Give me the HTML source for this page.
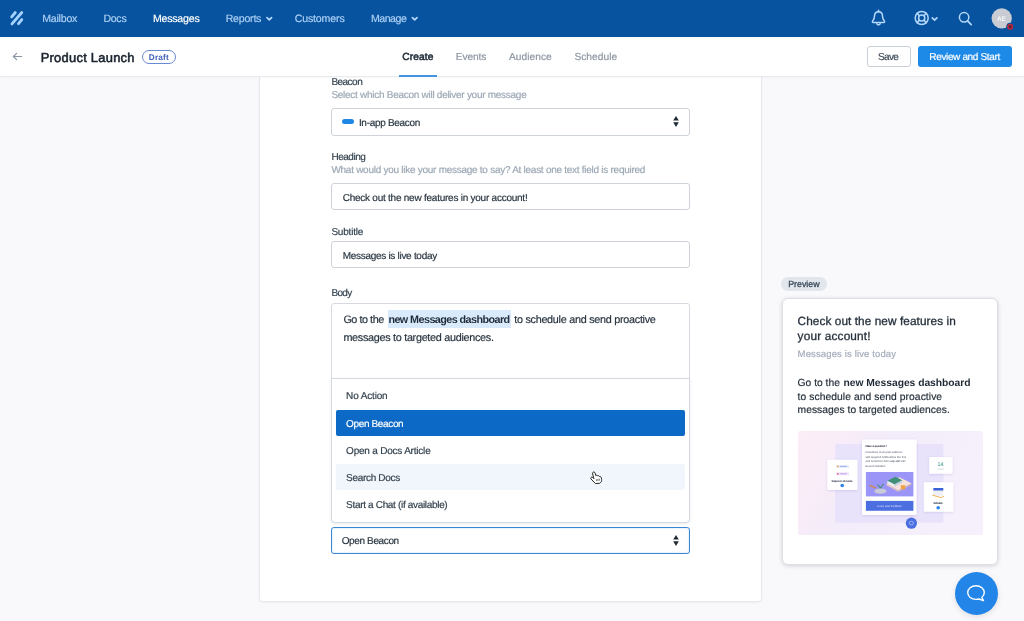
<!DOCTYPE html>
<html><head><meta charset="utf-8"><title>Product Launch</title>
<style>
*{box-sizing:border-box;margin:0;padding:0}
html,body{width:1024px;height:621px;overflow:hidden}
body{text-rendering:geometricPrecision;background:#f9f9fb;font-family:"Liberation Sans",sans-serif;color:#253642;position:relative}
.a{position:absolute}
.t{position:absolute;white-space:nowrap;font-family:"Liberation Sans",sans-serif}
#nav{left:0;top:0;width:1024px;height:37.4px;background:#07539f}
#sub{left:0;top:37px;width:1024px;height:39.5px;background:#fff;border-bottom:1px solid #e9ebee;box-shadow:0 1px 2px rgba(30,40,60,.04)}
#card{left:259px;top:60px;width:502.5px;height:541.5px;background:#fff;border:1px solid #e6e8ec;border-radius:4px;box-shadow:0 1px 2px rgba(30,40,60,.05)}
#draft{left:141.8px;top:50.2px;width:34.1px;height:14px;border:1px solid #6a88d4;border-radius:7px}
#tabline{left:398.7px;top:74.800px;width:38.5px;height:2px;background:#4394e2}
#save{left:867.2px;top:46.1px;width:43.7px;height:21px;border:1px solid #c9d0d7;border-radius:3px;background:#fff}
#review{left:917.9px;top:45.8px;width:94px;height:21.4px;border-radius:3px;background:#1e8ae8}
.inp{position:absolute;left:331px;width:358.5px;background:#fff;border:1px solid #cdd3d9;border-radius:3px}
#dd{left:331px;top:378px;width:358.5px;height:145px;background:#fff;border:1px solid #d5dae0;border-radius:0 0 4px 4px;box-shadow:0 1px 3px rgba(30,40,60,.10)}
#sel{left:335.6px;top:410px;width:349.6px;height:25.5px;background:#0c69c6;border-radius:2px}
#hov{left:335.6px;top:463.8px;width:349.6px;height:26px;background:#f1f6fd;border-radius:2px}
#focus{left:331px;top:526.7px;width:358.5px;height:27.2px;border:1.800px solid #3b85d2;border-radius:2.800px;background:#fff;box-shadow:inset 0 0 2px rgba(110,190,255,.55)}
#pbadge{left:781px;top:276.5px;width:46px;height:14.5px;border-radius:7.5px;background:#e2e7ed}
#pcard{left:782.3px;top:298.4px;width:216.2px;height:266.4px;border-radius:6px;background:#fff;border:1px solid #dcdfe4;box-shadow:0 1px 4px rgba(30,40,60,.18)}
#chat{left:954.6px;top:571.7px;width:43.4px;height:43.4px;border-radius:50%;background:#2485e8;box-shadow:0 2px 6px rgba(0,0,0,.10)}
#root{position:absolute;left:0;top:0;width:1024px;height:621px;will-change:transform}
</style></head><body><div id="root">
<div id="card" class="a"></div>
<div id="nav" class="a"></div>
<div id="sub" class="a"></div>
<div id="tabline" class="a"></div>
<div id="draft" class="a"></div>
<div id="save" class="a"></div>
<div id="review" class="a"></div>
<!-- nav icons -->
<svg class="a" style="left:0;top:0" width="1024" height="37" viewBox="0 0 1024 37">
 <g stroke="#a3d2ff" stroke-width="2.8" stroke-linecap="round" fill="none">
  <line x1="11.7" y1="16.9" x2="15.3" y2="12.5"/><line x1="12" y1="23.9" x2="21.8" y2="12.5"/><line x1="18.5" y1="23.7" x2="21.8" y2="19.6"/>
 </g>
 <g stroke="#b4d8fb" stroke-width="1.700" fill="none" stroke-linecap="round" stroke-linejoin="round">
  <polyline points="267,17.600 269.300,19.900 271.600,17.600"/>
  <polyline points="412.400,17.600 414.700,19.900 417,17.600"/>
 </g>
 <g stroke="#b4d8fb" stroke-width="1.5" fill="none" stroke-linecap="round" stroke-linejoin="round">
  <!-- bell -->
  <path d="M878.5 10.3 v1.2 M878.5 11.7 c-2.4 0 -4 1.800 -4 4.400 c0 2.400 -.4 3.500 -1.700 4.700 c-.8 .8 -.4 1.700 .6 1.700 h10.200 c1 0 1.400 -.9 .6 -1.700 c-1.300 -1.200 -1.700 -2.300 -1.700 -4.700 c0 -2.600 -1.600 -4.400 -4 -4.400 z"/>
  <path d="M876.9 23.7 a1.700 1.700 0 0 0 3.200 0"/>
  <!-- lifebuoy -->
  <circle cx="921.7" cy="18" r="6.5"/><circle cx="921.7" cy="18" r="3.1"/>
  <path d="M917.1 13.4 l2.400 2.400 M926.3 13.4 l-2.400 2.400 M917.1 22.6 l2.400 -2.400 M926.3 22.6 l-2.400 -2.400"/>
  <polyline points="932.3,17.800 934.600,20.100 936.900,17.800" stroke-width="1.700"/>
  <!-- search -->
  <circle cx="964.1" cy="17.3" r="4.7"/><line x1="967.6" y1="20.900" x2="971.2" y2="24.600" stroke-width="1.700"/>
 </g>
 <circle cx="1001.7" cy="18.4" r="10.1" fill="#c9cdd3"/>
 <circle cx="1010.2" cy="26.7" r="3.9" fill="#07539f"/>
 <circle cx="1010.2" cy="26.7" r="2.4" fill="#5a2a3a" stroke="#c8243c" stroke-width="1.3"/>
</svg>
<!-- back arrow -->
<svg class="a" style="left:12px;top:51px" width="12" height="11" viewBox="0 0 12 11"><g stroke="#8a96a6" stroke-width="1.2" fill="none" stroke-linecap="round" stroke-linejoin="round"><line x1="1.4" y1="5.5" x2="9.6" y2="5.5"/><polyline points="4.6,2.3 1.4,5.5 4.6,8.7"/></g></svg>

<!-- form fields -->
<div class="inp" style="top:108px;height:27.5px"></div>
<div class="a" style="left:342px;top:119.2px;width:11.8px;height:5.2px;border-radius:2.6px;background:#1f88e6"></div>
<svg class="a" style="left:673.3px;top:116.4px" width="6" height="11" viewBox="0 0 6 11"><path d="M3 0 L5.8 4.6 H0.2 Z M3 11 L5.8 6.2 H0.2 Z" fill="#1f2a33"/></svg>
<div class="inp" style="top:183.2px;height:27px"></div>
<div class="inp" style="top:241.2px;height:27px"></div>
<div class="inp" style="top:303.2px;height:140px;border-color:#d6dae0"></div>
<div class="a" style="left:388px;top:310px;width:123.2px;height:17.5px;background:#d8eafb"></div>
<div id="dd" class="a"></div>
<div id="sel" class="a"></div>
<div id="hov" class="a"></div>
<div id="focus" class="a"></div>
<svg class="a" style="left:673.3px;top:535px" width="6" height="11" viewBox="0 0 6 11"><path d="M3 0 L5.8 4.6 H0.2 Z M3 11 L5.8 6.2 H0.2 Z" fill="#1f2a33"/></svg>
<!-- cursor -->
<svg class="a" style="left:590.3px;top:471.2px" width="13" height="14" viewBox="0 0 13 14"><path d="M3 1.300 C3.600 .6 4.600 .9 4.900 1.800 L5.900 4.700 C6.400 4 7.400 4.100 7.700 4.900 C8.300 4.400 9.300 4.700 9.500 5.500 C10.200 5.200 11 5.700 11.200 6.500 L11.600 8.600 C11.800 9.800 11.400 10.900 10.500 11.600 L9.600 12.300 L5.400 12.500 L1 8 C.5 7.400 .7 6.600 1.400 6.300 C2 6 2.700 6.300 3.100 6.800 L3.900 7.700 L2.600 2.900 C2.400 2.300 2.500 1.700 3 1.300 Z" fill="#fff" stroke="#1c1c1c" stroke-width=".95" stroke-linejoin="round"/><path d="M6.300 8.300 l.5 1.900 M7.700 8 l.5 1.900 M9.100 7.700 l.5 1.900" stroke="#333" stroke-width=".7" fill="none"/></svg>
<!-- preview -->
<div id="pbadge" class="a"></div>
<div id="pcard" class="a"></div>
<svg class="a" style="left:797.6px;top:431.3px" width="185" height="104.200" viewBox="797.6 431.3 185 104.200">
 <defs><linearGradient id="g1" x1="0" y1="0" x2="1" y2="0.300"><stop offset="0" stop-color="#fcedf6"/><stop offset=".5" stop-color="#f3ecfa"/><stop offset="1" stop-color="#f6f0fc"/></linearGradient>
 <filter id="sh" x="-20%" y="-20%" width="140%" height="140%"><feDropShadow dx="0" dy=".6" stdDeviation=".9" flood-color="#5040a0" flood-opacity=".18"/></filter></defs>
 <rect x="797.6" y="431.3" width="185" height="104.200" rx="2" fill="url(#g1)"/>
 <rect x="834.8" y="444.4" width="108.200" height="78.600" rx="1.500" fill="#e8e3fb"/>
 <g filter="url(#sh)" fill="#fff">
  <rect x="861.6" y="439.8" width="54.600" height="75.600" rx="1.200"/>
  <rect x="826.9" y="460.1" width="30.200" height="30.300" rx="1"/>
  <rect x="928.8" y="457.2" width="23.500" height="16.900" rx="1"/>
  <rect x="923.4" y="482.5" width="29.600" height="29.500" rx="1"/>
 </g>
 <rect x="865.5" y="472.3" width="47.500" height="24.400" fill="#9a95f7"/>
 <rect x="865.5" y="501.2" width="47.500" height="9.900" fill="#4b6fe0"/>
 <!-- mini isometric illustration -->
 <polygon points="886,484 899,477.500 911,483.500 898,490.500" fill="#f6e3dc"/>
 <polygon points="886,484 898,490.500 898,492 886,485.500" fill="#e5c9c4"/>
 <polygon points="898,490.500 911,483.500 911,485 898,492" fill="#d9b9b6"/>
 <polygon points="887,481 895,477 902,480.500 894,484.800" fill="#3f8f7a"/>
 <polygon points="887,481 894,484.800 894,487 887,483.200" fill="#e9eef5"/>
 <polygon points="894,484.800 902,480.500 902,482.700 894,487" fill="#c7d0e0"/>
 <rect x="900.5" y="485.500" width="4.200" height="4.200" fill="#f0a340"/>
 <path d="M868.500 486 l6 3 l1.800 -1 l-6 -3 z" fill="#c98a5e"/>
 <ellipse cx="880" cy="491.500" rx="6" ry="2.600" fill="#c9cbd6"/>
 <path d="M880 488.500 q-1.500 -3 -3 -3.500 M880.500 488.500 q1 -3.500 3 -4" stroke="#3f8f7a" stroke-width="1.100" fill="none"/>
 <!-- left card -->
 <rect x="835.7" y="465.200" width="13.100" height="3" rx=".6" fill="#e8edfb"/><circle cx="837.400" cy="466.700" r=".9" fill="#f0a340"/><rect x="839.500" y="466.200" width="7" height="1" fill="#9db4ee"/>
 <rect x="835.7" y="472.600" width="13.100" height="3" rx=".6" fill="#f1e6fb"/><circle cx="837.400" cy="474.100" r=".9" fill="#e8506a"/><rect x="839.500" y="473.600" width="7" height="1" fill="#c4a8ee"/>
 <circle cx="841.8" cy="485.800" r="1.800" fill="#2a84e6"/>
 <rect x="937.400" y="468.900" width="6" height=".9" fill="#cfd4db"/>
 <!-- calendar -->
 <rect x="932.9" y="488.200" width="10" height="2.800" rx=".5" fill="#3a63d8"/>
 <rect x="932.900" y="491" width="10" height="5" fill="#eef0f6"/>
 <path d="M932 495.500 l9 2.500 l2.500 -1.500" stroke="#f0b050" stroke-width="1" fill="none"/>
 <circle cx="937.8" cy="508" r="1.800" fill="#2a84e6"/>
 <circle cx="911" cy="523.500" r="5.600" fill="#4b6fe0"/>
 <ellipse cx="911" cy="523.400" rx="2.100" ry="1.800" fill="none" stroke="#cdd8ff" stroke-width=".6"/>
</svg>
<div id="chat" class="a"></div>
<svg class="a" style="left:964px;top:582px" width="24" height="23" viewBox="964 582 24 23"><path d="M976 585.700 c4.700 0 8.300 3 8.300 6.900 c0 2-1 3.700-2.500 4.900 l1.700 3.200 l-4.600-1.700 c-.9.300-1.900.4-2.900.4 c-4.700 0-8.300-3-8.300-6.800 c0-3.900 3.600-6.900 8.300-6.900 z" fill="none" stroke="#fff" stroke-width="1.400" stroke-linejoin="round"/></svg>
<span class="t" id="t0" style="left:42.2px;top:13.00px;font-size:10.6px;line-height:12.00px;color:#acd0f5;-webkit-text-stroke:0.18px currentColor;letter-spacing:-0.219px;">Mailbox</span>
<span class="t" id="t1" style="left:103.4px;top:13.00px;font-size:10.6px;line-height:12.00px;color:#acd0f5;-webkit-text-stroke:0.18px currentColor;letter-spacing:-0.280px;">Docs</span>
<span class="t" id="t2" style="left:152.9px;top:13.00px;font-size:10.6px;line-height:12.00px;color:#ffffff;-webkit-text-stroke:0.18px currentColor;letter-spacing:-0.214px;">Messages</span>
<span class="t" id="t3" style="left:225.7px;top:13.00px;font-size:10.6px;line-height:12.00px;color:#acd0f5;-webkit-text-stroke:0.18px currentColor;letter-spacing:-0.232px;">Reports</span>
<span class="t" id="t4" style="left:294.7px;top:13.00px;font-size:10.6px;line-height:12.00px;color:#acd0f5;-webkit-text-stroke:0.18px currentColor;letter-spacing:-0.152px;">Customers</span>
<span class="t" id="t5" style="left:370.9px;top:13.00px;font-size:10.6px;line-height:12.00px;color:#acd0f5;-webkit-text-stroke:0.18px currentColor;letter-spacing:-0.459px;">Manage</span>
<span class="t" id="t6" style="left:40.7px;top:50.00px;font-size:12.9px;line-height:15.00px;color:#18222c;-webkit-text-stroke:0.55px currentColor;letter-spacing:0.268px;">Product Launch</span>
<span class="t" id="t7" style="left:148.8px;top:53.00px;font-size:8.2px;line-height:9.00px;color:#3f62b8;font-weight:bold;letter-spacing:0.198px;">Draft</span>
<span class="t" id="t8" style="left:402.2px;top:52.00px;font-size:10.2px;line-height:11.00px;color:#26323d;-webkit-text-stroke:0.55px currentColor;letter-spacing:0.124px;">Create</span>
<span class="t" id="t9" style="left:455.7px;top:52.00px;font-size:10.2px;line-height:11.00px;color:#8c96a2;-webkit-text-stroke:0.18px currentColor;letter-spacing:-0.091px;">Events</span>
<span class="t" id="t10" style="left:508.9px;top:52.00px;font-size:10.2px;line-height:11.00px;color:#8c96a2;-webkit-text-stroke:0.18px currentColor;letter-spacing:0.045px;">Audience</span>
<span class="t" id="t11" style="left:574.4px;top:52.00px;font-size:10.2px;line-height:11.00px;color:#8c96a2;-webkit-text-stroke:0.18px currentColor;letter-spacing:0.045px;">Schedule</span>
<span class="t" id="t12" style="left:878.1px;top:52.00px;font-size:10px;line-height:11.00px;color:#3c4a57;-webkit-text-stroke:0.18px currentColor;letter-spacing:-0.666px;">Save</span>
<span class="t" id="t13" style="left:929.3px;top:52.00px;font-size:10px;line-height:11.00px;color:#ffffff;-webkit-text-stroke:0.18px currentColor;letter-spacing:-0.350px;">Review and Start</span>
<span class="t" id="t14" style="left:331.4px;top:77.00px;font-size:10px;line-height:11.00px;color:#33424f;-webkit-text-stroke:0.18px currentColor;letter-spacing:-0.524px;">Beacon</span>
<span class="t" id="t15" style="left:331.4px;top:90.00px;font-size:10px;line-height:11.00px;color:#9ca8b4;-webkit-text-stroke:0.18px currentColor;letter-spacing:-0.273px;">Select which Beacon will deliver your message</span>
<span class="t" id="t16" style="left:358.9px;top:118.00px;font-size:10px;line-height:11.00px;color:#27343f;-webkit-text-stroke:0.18px currentColor;letter-spacing:-0.297px;">In-app Beacon</span>
<span class="t" id="t17" style="left:331.4px;top:152.00px;font-size:10px;line-height:11.00px;color:#33424f;-webkit-text-stroke:0.18px currentColor;letter-spacing:-0.461px;">Heading</span>
<span class="t" id="t18" style="left:331.4px;top:165.00px;font-size:10px;line-height:11.00px;color:#9ca8b4;-webkit-text-stroke:0.18px currentColor;letter-spacing:-0.268px;">What would you like your message to say? At least one text field is required</span>
<span class="t" id="t19" style="left:342.7px;top:193.00px;font-size:10px;line-height:11.00px;color:#27343f;-webkit-text-stroke:0.18px currentColor;letter-spacing:-0.241px;">Check out the new features in your account!</span>
<span class="t" id="t20" style="left:331.4px;top:227.00px;font-size:10px;line-height:11.00px;color:#33424f;-webkit-text-stroke:0.18px currentColor;letter-spacing:-0.194px;">Subtitle</span>
<span class="t" id="t21" style="left:342.7px;top:251.00px;font-size:10px;line-height:11.00px;color:#27343f;-webkit-text-stroke:0.18px currentColor;letter-spacing:-0.291px;">Messages is live today</span>
<span class="t" id="t22" style="left:331.4px;top:288.00px;font-size:10px;line-height:11.00px;color:#33424f;-webkit-text-stroke:0.18px currentColor;letter-spacing:-0.666px;">Body</span>
<span class="t" id="t23" style="left:343.4px;top:314.00px;font-size:10.8px;line-height:12.00px;color:#27343f;-webkit-text-stroke:0.18px currentColor;letter-spacing:-0.453px;">Go to the</span>
<span class="t" id="t24" style="left:388.4px;top:314.00px;font-size:10.8px;line-height:12.00px;color:#1f2b36;font-weight:bold;letter-spacing:-0.572px;">new Messages dashboard</span>
<span class="t" id="t25" style="left:514.2px;top:314.00px;font-size:10.8px;line-height:12.00px;color:#27343f;-webkit-text-stroke:0.18px currentColor;letter-spacing:-0.268px;">to schedule and send proactive</span>
<span class="t" id="t26" style="left:343.4px;top:332.00px;font-size:10.8px;line-height:12.00px;color:#27343f;-webkit-text-stroke:0.18px currentColor;letter-spacing:-0.285px;">messages to targeted audiences.</span>
<span class="t" id="t27" style="left:346.1px;top:391.00px;font-size:10px;line-height:11.00px;color:#33404c;-webkit-text-stroke:0.18px currentColor;letter-spacing:-0.152px;">No Action</span>
<span class="t" id="t28" style="left:346.1px;top:419.00px;font-size:10px;line-height:11.00px;color:#ffffff;-webkit-text-stroke:0.18px currentColor;letter-spacing:-0.357px;">Open Beacon</span>
<span class="t" id="t29" style="left:346.1px;top:446.00px;font-size:10px;line-height:11.00px;color:#33404c;-webkit-text-stroke:0.18px currentColor;letter-spacing:-0.210px;">Open a Docs Article</span>
<span class="t" id="t30" style="left:346.1px;top:473.00px;font-size:10px;line-height:11.00px;color:#33404c;-webkit-text-stroke:0.18px currentColor;letter-spacing:-0.315px;">Search Docs</span>
<span class="t" id="t31" style="left:346.1px;top:500.00px;font-size:10px;line-height:11.00px;color:#33404c;-webkit-text-stroke:0.18px currentColor;letter-spacing:-0.325px;">Start a Chat (if available)</span>
<span class="t" id="t32" style="left:341.7px;top:536.00px;font-size:10px;line-height:11.00px;color:#27343f;-webkit-text-stroke:0.18px currentColor;letter-spacing:-0.367px;">Open Beacon</span>
<span class="t" id="t33" style="left:788.2px;top:279.00px;font-size:8.8px;line-height:10.00px;color:#3d4b5a;-webkit-text-stroke:0.3px currentColor;letter-spacing:0.017px;">Preview</span>
<span class="t" id="t34" style="left:797.6px;top:314.00px;font-size:11.8px;line-height:14.00px;color:#26313c;-webkit-text-stroke:0.3px currentColor;letter-spacing:0.076px;">Check out the new features in</span>
<span class="t" id="t35" style="left:797.6px;top:329.00px;font-size:11.8px;line-height:14.00px;color:#26313c;-webkit-text-stroke:0.3px currentColor;letter-spacing:0.181px;">your account!</span>
<span class="t" id="t36" style="left:797.6px;top:349.00px;font-size:9.5px;line-height:11.00px;color:#a3acba;-webkit-text-stroke:0.18px currentColor;letter-spacing:0.134px;">Messages is live today</span>
<span class="t" id="t37" style="left:797.6px;top:378.00px;font-size:10.3px;line-height:11.00px;color:#26313c;-webkit-text-stroke:0.18px currentColor;letter-spacing:-0.007px;">Go to the</span>
<span class="t" id="t38" style="left:843.5px;top:378.00px;font-size:10.3px;line-height:11.00px;color:#1f2a35;font-weight:bold;letter-spacing:-0.025px;">new Messages dashboard</span>
<span class="t" id="t39" style="left:797.6px;top:392.00px;font-size:10.3px;line-height:11.00px;color:#26313c;-webkit-text-stroke:0.18px currentColor;letter-spacing:0.067px;">to schedule and send proactive</span>
<span class="t" id="t40" style="left:797.6px;top:405.00px;font-size:10.3px;line-height:11.00px;color:#26313c;-webkit-text-stroke:0.18px currentColor;letter-spacing:0.017px;">messages to targeted audiences.</span>
<span class="t" id="t41" style="left:997.0px;top:16.00px;font-size:6.5px;line-height:7.00px;color:#f4f6f8;font-weight:bold;letter-spacing:-0.231px;">AE</span>
<span class="t" id="t42" style="left:865.5px;top:444.00px;font-size:2.9px;line-height:4.00px;color:#2a2f45;font-weight:bold;letter-spacing:-0.163px;">Have a question?</span>
<span class="t" id="t43" style="left:865.5px;top:451.00px;font-size:2.7px;line-height:3.00px;color:#4a4f63;letter-spacing:-0.042px;">Proactively reach your audience</span>
<span class="t" id="t44" style="left:865.5px;top:456.00px;font-size:2.7px;line-height:3.00px;color:#4a4f63;letter-spacing:0.013px;">with targeted notifications like this</span>
<span class="t" id="t45" style="left:865.5px;top:460.00px;font-size:2.7px;line-height:3.00px;color:#4a4f63;letter-spacing:-0.021px;">and Send them from <b>any site</b> with</span>
<span class="t" id="t46" style="left:865.5px;top:465.00px;font-size:2.7px;line-height:3.00px;color:#4a4f63;letter-spacing:-0.029px;">Beacon installed.</span>
<span class="t" id="t47" style="left:877.0px;top:505.00px;font-size:2.7px;line-height:3.00px;color:#dfe6ff;letter-spacing:-0.025px;">Leave your feedback</span>
<span class="t" id="t48" style="left:831.4px;top:480.00px;font-size:2.7px;line-height:3.00px;color:#2a2f45;font-weight:bold;letter-spacing:-0.238px;">Sequence of events</span>
<span class="t" id="t49" style="left:937.6px;top:462.00px;font-size:5.4px;line-height:6.00px;color:#2f9384;letter-spacing:-0.200px;">14</span>
<span class="t" id="t50" style="left:933.2px;top:502.00px;font-size:2.7px;line-height:3.00px;color:#2a2f45;font-weight:bold;letter-spacing:-0.350px;">Schedule</span>
</div></body></html>
